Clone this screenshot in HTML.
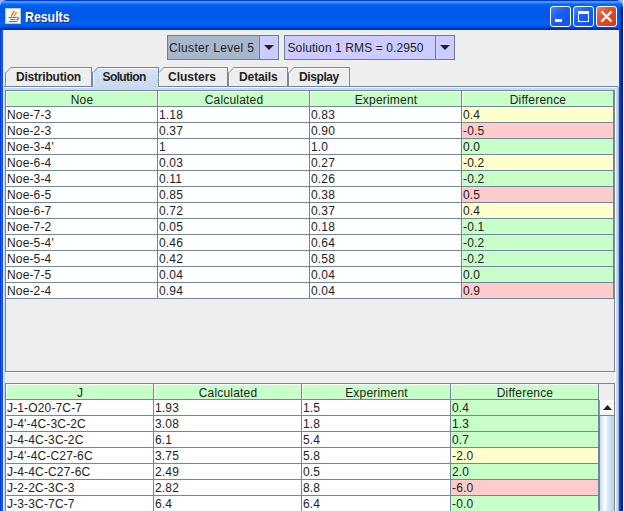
<!DOCTYPE html>
<html><head><meta charset="utf-8"><style>
*{margin:0;padding:0;box-sizing:border-box}
html,body{width:624px;height:511px;overflow:hidden;background:#fff;font-family:"Liberation Sans",sans-serif;font-size:12px;color:#222}
div{position:absolute}
.frame{left:0;top:0;width:623px;height:540px;background:#0846DA;border-radius:8px 8px 0 0;overflow:hidden}
.title{left:0;top:0;width:623px;height:30px;background:linear-gradient(180deg,#0838D0 0px,#0838D0 1px,#3A98FF 1px,#3A98FF 3px,#1878FF 3px,#0066F6 5px,#005AEA 7px,#0058E6 18px,#0060F2 21px,#0064F8 24px,#0054E6 26px,#0048D8 27.5px,#0034C0 28px,#0034C0 30px)}
.lb{left:0;top:30px;width:4px;height:510px;background:linear-gradient(90deg,#0A3CD0 0,#0A3CD0 1px,#1A5CF0 1px,#1A5CF0 2px,#0A50E8 2px,#0A50E8 3px,#E8EEF8 3px)}
.rb{left:619px;top:7px;width:4px;height:540px;background:linear-gradient(90deg,#1050F0,#0A46E0 1px,#0030B8 2px,#001E90 3px)}
.client{left:4px;top:30px;width:615px;height:481px;background:#EEEEEE}
.ttl{left:25px;top:8px;font-weight:bold;font-size:14px;color:#fff;text-shadow:1px 1px 0 #0A2A9A;line-height:18px;transform:scaleX(0.88);transform-origin:0 0}
.wb{top:6px;width:21px;height:21px;border:1px solid #fff;border-radius:3px;background:linear-gradient(135deg,#4A86FF,#1E5EF6 40%,#1050E8)}
.cb{top:35px;height:25px;border:1px solid #6F7F8F;background:#CCCCFF}
.ctext{top:1px;line-height:23px;left:2px;color:#222}
.arr{width:0;height:0;border-left:5px solid transparent;border-right:5px solid transparent;border-top:5px solid #222}
.tab{top:67px;height:20px;border:1px solid #7A8A99;border-bottom:none;background:#EEEEEE;line-height:17px;color:#222;font-weight:bold;letter-spacing:-0.3px}
.hc{height:15px;background:#C8FFC8;text-align:center;letter-spacing:0.2px;line-height:15px;padding-top:1px;border-left:1px solid #fff;border-top:1px solid #fff}
.c{height:15px;line-height:15px;padding-left:1px;padding-top:1px;letter-spacing:0.15px;white-space:nowrap;overflow:hidden}
.gridv{width:1px;background:#72869E}
.gridh{height:1px;background:#72869E}
</style></head><body>
<div style="left:0;top:0;width:10px;height:10px;background:#8FB0F0"></div><div style="left:613px;top:0;width:10px;height:10px;background:#A0B4E8"></div>
<div class="frame">
<div class="title"></div>
<div class="lb"></div>
<div class="rb"></div>
</div>
<div class="client"></div>

<div style="left:5px;top:8px;width:16px;height:16px;background:#F6F4EE;border:1px solid #C8C4B8">
<svg width="14" height="14" viewBox="0 0 14 14" style="position:absolute;left:0;top:0">
<path d="M5.6 7.6 C4.6 6 7.5 5 8.2 2" stroke="#E86A10" stroke-width="1.2" fill="none"/>
<path d="M8 7.6 C7.8 6 10.6 5.6 10.2 3.2" stroke="#F08020" stroke-width="1.2" fill="none"/>
<path d="M2.5 8.5 H10 M4.5 10.5 H9.5 M3 12.5 H11" stroke="#5878A8" stroke-width="1"/>
<path d="M10.5 8 C13 8.5 13 10.5 10.5 11" stroke="#506890" stroke-width="1.2" fill="none"/>
</svg></div>
<div class="ttl">Results</div>
<div class="wb" style="left:550px"><div style="left:4px;top:12px;width:7px;height:3px;background:#fff"></div></div>
<div class="wb" style="left:573px"><div style="left:4px;top:4px;width:11px;height:11px;border:1px solid #fff;border-top:3px solid #fff"></div></div>
<div class="wb" style="left:596px;background:linear-gradient(135deg,#EE8060,#E05030 40%,#CC3C18)"><svg width="19" height="19" style="position:absolute;left:0;top:0"><path d="M4.5 4.5 L14.5 14.5 M14.5 4.5 L4.5 14.5" stroke="#fff" stroke-width="2.4"/></svg></div>

<div class="cb" style="left:167px;width:112px;background:#A8B8CC"><div class="ctext" style="letter-spacing:0.35px;left:1px">Cluster Level 5</div>
<div style="left:91px;top:0;width:19px;height:23px;background:#CCCCFF;border-left:1px solid #6F7F8F"><svg style="position:absolute;left:4px;top:9px" width="10" height="5"><polygon points="0,0 10,0 5,5" fill="#222"/></svg></div></div>
<div class="cb" style="left:284px;width:171px"><div class="ctext" style="left:2.5px;letter-spacing:0.1px">Solution 1 RMS = 0.2950</div>
<div style="left:150px;top:0;width:19px;height:23px;background:#CCCCFF;border-left:1px solid #6F7F8F"><svg style="position:absolute;left:4px;top:9px" width="10" height="5"><polygon points="0,0 10,0 5,5" fill="#222"/></svg></div></div>

<div style="left:4px;top:87px;width:615px;height:430px;background:#EEEEEE;border-left:1px solid #C8DAF0;border-right:3px solid #C8DAF0;border-top:3px solid #C8DAF0"></div>
<div style="left:615px;top:90px;width:1px;height:430px;background:#FFFFFF"></div>
<div style="left:5px;top:87px;width:612px;height:1px;background:#FFFFFF"></div>
<div style="left:618px;top:87px;width:1px;height:430px;background:#98A8B8"></div>

<div style="left:4px;top:86px;width:614px;height:1px;background:#6382BF"></div>
<div class="tab" style="left:5px;width:87px;height:20px;background:#EEEEEE;border-color:#7A8A99;border-bottom:1px solid #6382BF;clip-path:polygon(6px 0,100% 0,100% 100%,0 100%,0 6px);box-shadow:inset 1px 1px 0 #fff"><div style="left:10px;top:1px;white-space:nowrap;letter-spacing:-0.2px;font-weight:bold">Distribution</div></div>
<svg style="position:absolute;left:5px;top:67px" width="8" height="8"><path d="M0.5 6 L6 0.5" stroke="#7A8A99" stroke-width="1"/></svg>
<div class="tab" style="left:92px;width:67px;height:20px;background:linear-gradient(180deg,#D4E4F6,#C8DAF0);border-color:#6382BF;border-bottom:none;clip-path:polygon(6px 0,100% 0,100% 100%,0 100%,0 6px);box-shadow:inset 1px 1px 0 #fff"><div style="left:9.5px;top:1px;white-space:nowrap;letter-spacing:-0.6px;font-weight:bold">Solution</div></div>
<svg style="position:absolute;left:92px;top:67px" width="8" height="8"><path d="M0.5 6 L6 0.5" stroke="#6382BF" stroke-width="1"/></svg>
<div class="tab" style="left:158px;width:70px;height:20px;background:#EEEEEE;border-color:#7A8A99;border-bottom:1px solid #6382BF;clip-path:polygon(6px 0,100% 0,100% 100%,0 100%,0 6px);box-shadow:inset 1px 1px 0 #fff"><div style="left:9px;top:1px;white-space:nowrap;letter-spacing:0px;font-weight:bold">Clusters</div></div>
<svg style="position:absolute;left:158px;top:67px" width="8" height="8"><path d="M0.5 6 L6 0.5" stroke="#7A8A99" stroke-width="1"/></svg>
<div class="tab" style="left:228px;width:60px;height:20px;background:#EEEEEE;border-color:#7A8A99;border-bottom:1px solid #6382BF;clip-path:polygon(6px 0,100% 0,100% 100%,0 100%,0 6px);box-shadow:inset 1px 1px 0 #fff"><div style="left:10px;top:1px;white-space:nowrap;letter-spacing:-0.1px;font-weight:bold">Details</div></div>
<svg style="position:absolute;left:228px;top:67px" width="8" height="8"><path d="M0.5 6 L6 0.5" stroke="#7A8A99" stroke-width="1"/></svg>
<div class="tab" style="left:288px;width:62px;height:20px;background:#EEEEEE;border-color:#7A8A99;border-bottom:1px solid #6382BF;clip-path:polygon(6px 0,100% 0,100% 100%,0 100%,0 6px);box-shadow:inset 1px 1px 0 #fff"><div style="left:10px;top:1px;white-space:nowrap;letter-spacing:-0.4px;font-weight:bold">Display</div></div>
<svg style="position:absolute;left:288px;top:67px" width="8" height="8"><path d="M0.5 6 L6 0.5" stroke="#7A8A99" stroke-width="1"/></svg>
<div style="left:93px;top:86px;width:65px;height:4px;background:#C8DAF0"></div>
<div style="left:5px;top:90px;width:610px;height:282px;border:1px solid #72869E;background:#EEEEEE"></div>
<div style="left:6px;top:372px;width:609px;height:1px;background:#fff"></div>
<div class="hc" style="left:6px;top:91px;width:151px">Noe</div>
<div class="hc" style="left:158px;top:91px;width:151px">Calculated</div>
<div class="hc" style="left:310px;top:91px;width:151px">Experiment</div>
<div class="hc" style="left:462px;top:91px;width:151px">Difference</div>
<div class="c" style="left:6px;top:107px;width:151px;background:#FFFFFF">Noe-7-3</div>
<div class="c" style="left:158px;top:107px;width:151px;background:#FFFFFF">1.18</div>
<div class="c" style="left:310px;top:107px;width:151px;background:#FFFFFF">0.83</div>
<div class="c" style="left:462px;top:107px;width:151px;background:#FFFFCC">0.4</div>
<div class="c" style="left:6px;top:123px;width:151px;background:#FFFFFF">Noe-2-3</div>
<div class="c" style="left:158px;top:123px;width:151px;background:#FFFFFF">0.37</div>
<div class="c" style="left:310px;top:123px;width:151px;background:#FFFFFF">0.90</div>
<div class="c" style="left:462px;top:123px;width:151px;background:#FFCCCC">-0.5</div>
<div class="c" style="left:6px;top:139px;width:151px;background:#FFFFFF">Noe-3-4'</div>
<div class="c" style="left:158px;top:139px;width:151px;background:#FFFFFF">1</div>
<div class="c" style="left:310px;top:139px;width:151px;background:#FFFFFF">1.0</div>
<div class="c" style="left:462px;top:139px;width:151px;background:#C8FFC8">0.0</div>
<div class="c" style="left:6px;top:155px;width:151px;background:#FFFFFF">Noe-6-4</div>
<div class="c" style="left:158px;top:155px;width:151px;background:#FFFFFF">0.03</div>
<div class="c" style="left:310px;top:155px;width:151px;background:#FFFFFF">0.27</div>
<div class="c" style="left:462px;top:155px;width:151px;background:#FFFFCC">-0.2</div>
<div class="c" style="left:6px;top:171px;width:151px;background:#FFFFFF">Noe-3-4</div>
<div class="c" style="left:158px;top:171px;width:151px;background:#FFFFFF">0.11</div>
<div class="c" style="left:310px;top:171px;width:151px;background:#FFFFFF">0.26</div>
<div class="c" style="left:462px;top:171px;width:151px;background:#C8FFC8">-0.2</div>
<div class="c" style="left:6px;top:187px;width:151px;background:#FFFFFF">Noe-6-5</div>
<div class="c" style="left:158px;top:187px;width:151px;background:#FFFFFF">0.85</div>
<div class="c" style="left:310px;top:187px;width:151px;background:#FFFFFF">0.38</div>
<div class="c" style="left:462px;top:187px;width:151px;background:#FFCCCC">0.5</div>
<div class="c" style="left:6px;top:203px;width:151px;background:#FFFFFF">Noe-6-7</div>
<div class="c" style="left:158px;top:203px;width:151px;background:#FFFFFF">0.72</div>
<div class="c" style="left:310px;top:203px;width:151px;background:#FFFFFF">0.37</div>
<div class="c" style="left:462px;top:203px;width:151px;background:#FFFFCC">0.4</div>
<div class="c" style="left:6px;top:219px;width:151px;background:#FFFFFF">Noe-7-2</div>
<div class="c" style="left:158px;top:219px;width:151px;background:#FFFFFF">0.05</div>
<div class="c" style="left:310px;top:219px;width:151px;background:#FFFFFF">0.18</div>
<div class="c" style="left:462px;top:219px;width:151px;background:#C8FFC8">-0.1</div>
<div class="c" style="left:6px;top:235px;width:151px;background:#FFFFFF">Noe-5-4'</div>
<div class="c" style="left:158px;top:235px;width:151px;background:#FFFFFF">0.46</div>
<div class="c" style="left:310px;top:235px;width:151px;background:#FFFFFF">0.64</div>
<div class="c" style="left:462px;top:235px;width:151px;background:#C8FFC8">-0.2</div>
<div class="c" style="left:6px;top:251px;width:151px;background:#FFFFFF">Noe-5-4</div>
<div class="c" style="left:158px;top:251px;width:151px;background:#FFFFFF">0.42</div>
<div class="c" style="left:310px;top:251px;width:151px;background:#FFFFFF">0.58</div>
<div class="c" style="left:462px;top:251px;width:151px;background:#C8FFC8">-0.2</div>
<div class="c" style="left:6px;top:267px;width:151px;background:#FFFFFF">Noe-7-5</div>
<div class="c" style="left:158px;top:267px;width:151px;background:#FFFFFF">0.04</div>
<div class="c" style="left:310px;top:267px;width:151px;background:#FFFFFF">0.04</div>
<div class="c" style="left:462px;top:267px;width:151px;background:#C8FFC8">0.0</div>
<div class="c" style="left:6px;top:283px;width:151px;background:#FFFFFF">Noe-2-4</div>
<div class="c" style="left:158px;top:283px;width:151px;background:#FFFFFF">0.94</div>
<div class="c" style="left:310px;top:283px;width:151px;background:#FFFFFF">0.04</div>
<div class="c" style="left:462px;top:283px;width:151px;background:#FFCCCC">0.9</div>
<div class="gridv" style="left:157px;top:90px;height:209px"></div>
<div class="gridv" style="left:309px;top:90px;height:209px"></div>
<div class="gridv" style="left:461px;top:90px;height:209px"></div>
<div class="gridv" style="left:613px;top:90px;height:209px"></div>
<div class="gridh" style="left:5px;top:106px;width:609px"></div>
<div class="gridh" style="left:5px;top:122px;width:609px"></div>
<div class="gridh" style="left:5px;top:138px;width:609px"></div>
<div class="gridh" style="left:5px;top:154px;width:609px"></div>
<div class="gridh" style="left:5px;top:170px;width:609px"></div>
<div class="gridh" style="left:5px;top:186px;width:609px"></div>
<div class="gridh" style="left:5px;top:202px;width:609px"></div>
<div class="gridh" style="left:5px;top:218px;width:609px"></div>
<div class="gridh" style="left:5px;top:234px;width:609px"></div>
<div class="gridh" style="left:5px;top:250px;width:609px"></div>
<div class="gridh" style="left:5px;top:266px;width:609px"></div>
<div class="gridh" style="left:5px;top:282px;width:609px"></div>
<div class="gridh" style="left:5px;top:298px;width:609px"></div>
<div style="left:5px;top:383px;width:610px;height:140px;border:1px solid #72869E;background:#EEEEEE"></div>
<div class="hc" style="left:6px;top:384px;width:147px">J</div>
<div class="hc" style="left:154px;top:384px;width:147px">Calculated</div>
<div class="hc" style="left:302px;top:384px;width:148px">Experiment</div>
<div class="hc" style="left:451px;top:384px;width:147px">Difference</div>
<div class="c" style="left:6px;top:400px;width:147px;background:#FFFFFF">J-1-O20-7C-7</div>
<div class="c" style="left:154px;top:400px;width:147px;background:#FFFFFF">1.93</div>
<div class="c" style="left:302px;top:400px;width:148px;background:#FFFFFF">1.5</div>
<div class="c" style="left:451px;top:400px;width:147px;background:#C8FFC8">0.4</div>
<div class="c" style="left:6px;top:416px;width:147px;background:#FFFFFF">J-4'-4C-3C-2C</div>
<div class="c" style="left:154px;top:416px;width:147px;background:#FFFFFF">3.08</div>
<div class="c" style="left:302px;top:416px;width:148px;background:#FFFFFF">1.8</div>
<div class="c" style="left:451px;top:416px;width:147px;background:#C8FFC8">1.3</div>
<div class="c" style="left:6px;top:432px;width:147px;background:#FFFFFF">J-4-4C-3C-2C</div>
<div class="c" style="left:154px;top:432px;width:147px;background:#FFFFFF">6.1</div>
<div class="c" style="left:302px;top:432px;width:148px;background:#FFFFFF">5.4</div>
<div class="c" style="left:451px;top:432px;width:147px;background:#C8FFC8">0.7</div>
<div class="c" style="left:6px;top:448px;width:147px;background:#FFFFFF">J-4'-4C-C27-6C</div>
<div class="c" style="left:154px;top:448px;width:147px;background:#FFFFFF">3.75</div>
<div class="c" style="left:302px;top:448px;width:148px;background:#FFFFFF">5.8</div>
<div class="c" style="left:451px;top:448px;width:147px;background:#FFFFCC">-2.0</div>
<div class="c" style="left:6px;top:464px;width:147px;background:#FFFFFF">J-4-4C-C27-6C</div>
<div class="c" style="left:154px;top:464px;width:147px;background:#FFFFFF">2.49</div>
<div class="c" style="left:302px;top:464px;width:148px;background:#FFFFFF">0.5</div>
<div class="c" style="left:451px;top:464px;width:147px;background:#C8FFC8">2.0</div>
<div class="c" style="left:6px;top:480px;width:147px;background:#FFFFFF">J-2-2C-3C-3</div>
<div class="c" style="left:154px;top:480px;width:147px;background:#FFFFFF">2.82</div>
<div class="c" style="left:302px;top:480px;width:148px;background:#FFFFFF">8.8</div>
<div class="c" style="left:451px;top:480px;width:147px;background:#FFCCCC">-6.0</div>
<div class="c" style="left:6px;top:496px;width:147px;background:#FFFFFF">J-3-3C-7C-7</div>
<div class="c" style="left:154px;top:496px;width:147px;background:#FFFFFF">6.4</div>
<div class="c" style="left:302px;top:496px;width:148px;background:#FFFFFF">6.4</div>
<div class="c" style="left:451px;top:496px;width:147px;background:#C8FFC8">-0.0</div>
<div class="gridv" style="left:153px;top:383px;height:130px"></div>
<div class="gridv" style="left:301px;top:383px;height:130px"></div>
<div class="gridv" style="left:450px;top:383px;height:130px"></div>
<div class="gridv" style="left:598px;top:383px;height:130px"></div>
<div class="gridh" style="left:5px;top:399px;width:594px"></div>
<div class="gridh" style="left:5px;top:415px;width:594px"></div>
<div class="gridh" style="left:5px;top:431px;width:594px"></div>
<div class="gridh" style="left:5px;top:447px;width:594px"></div>
<div class="gridh" style="left:5px;top:463px;width:594px"></div>
<div class="gridh" style="left:5px;top:479px;width:594px"></div>
<div class="gridh" style="left:5px;top:495px;width:594px"></div>
<div class="gridh" style="left:5px;top:511px;width:594px"></div>
<div style="left:599px;top:400px;width:15px;height:15px;background:linear-gradient(180deg,#FFFFFF,#F4F4F4);border-left:1px solid #8A96A8"><svg style="position:absolute;left:3px;top:5px" width="9" height="5"><polygon points="0,5 9,5 4.5,0" fill="#222"/></svg></div>
<div style="left:599px;top:415px;width:15px;height:100px;border-left:1px solid #6382BF;border-top:1px solid #6382BF;background:linear-gradient(90deg,#C8DAF0,#FFFFFF 35%,#D8E6F4 60%,#B8CFE5)"></div>

</body></html>
